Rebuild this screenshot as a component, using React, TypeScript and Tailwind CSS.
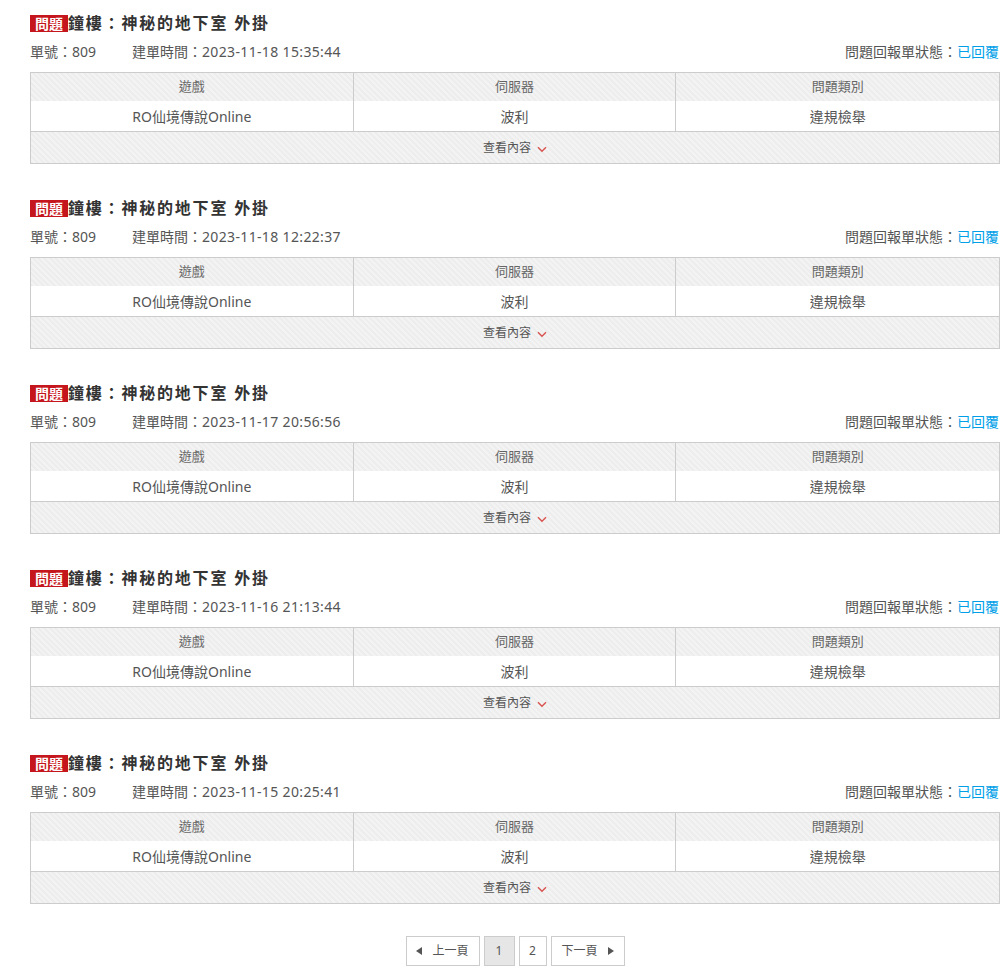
import React from "react";

interface Ticket {
  no: string;
  createdAt: string;
  game: string;
  server: string;
  category: string;
}

const tickets: Ticket[] = [
  { no: "809", createdAt: "2023-11-18 15:35:44", game: "RO仙境傳說Online", server: "波利", category: "違規檢舉" },
  { no: "809", createdAt: "2023-11-18 12:22:37", game: "RO仙境傳說Online", server: "波利", category: "違規檢舉" },
  { no: "809", createdAt: "2023-11-17 20:56:56", game: "RO仙境傳說Online", server: "波利", category: "違規檢舉" },
  { no: "809", createdAt: "2023-11-16 21:13:44", game: "RO仙境傳說Online", server: "波利", category: "違規檢舉" },
  { no: "809", createdAt: "2023-11-15 20:25:41", game: "RO仙境傳說Online", server: "波利", category: "違規檢舉" },
];

const stripe =
  "bg-[repeating-linear-gradient(45deg,#ededed_0px,#ededed_2px,#f3f3f3_2px,#f3f3f3_4px)]";

const ChevronDown = () => (
  <svg width="10" height="7" viewBox="0 0 10 7" className="ml-[6px] mt-[3px]">
    <path d="M1 1.2 L5 5.2 L9 1.2" fill="none" stroke="#d9534f" strokeWidth="1.4" />
  </svg>
);

const TicketCard: React.FC<{ ticket: Ticket }> = ({ ticket }) => {
  return (
    <div className="mb-[32px]">
      <div className="flex items-center h-[24px]">
        <span className="bg-[#c4161c] text-white text-[14px] font-bold leading-[17px] h-[17px] w-[38px] flex items-center justify-center">
          問題
        </span>
        <span className="text-[#333] text-[16px] font-bold tracking-[1.8px] leading-[24px]">
          鐘樓：神秘的地下室 外掛
        </span>
      </div>
      <div className="flex items-center justify-between h-[20px] mt-[6px] text-[14px] text-[#555]">
        <div className="flex">
          <span className="w-[102px]">單號：{ticket.no}</span>
          <span>
            建單時間：<span className="tracking-[0.35px]">{ticket.createdAt}</span>
          </span>
        </div>
        <div className="pr-[1px]">
          問題回報單狀態：<span className="text-[#009fe8]">已回覆</span>
        </div>
      </div>
      <div className="mt-[11px] border border-[#ccc]">
        <div className={`grid grid-cols-3 h-[28px] text-[13px] text-[#666] ${stripe}`}>
          <div className="flex items-center justify-center border-r border-[#ccc]">遊戲</div>
          <div className="flex items-center justify-center border-r border-[#ccc]">伺服器</div>
          <div className="flex items-center justify-center">問題類別</div>
        </div>
        <div className="grid grid-cols-3 h-[31px] text-[14px] text-[#555] bg-white border-b border-[#ccc]">
          <div className="flex items-center justify-center border-r border-[#ccc]">{ticket.game}</div>
          <div className="flex items-center justify-center border-r border-[#ccc]">{ticket.server}</div>
          <div className="flex items-center justify-center">{ticket.category}</div>
        </div>
        <div className={`flex items-center justify-center h-[31px] text-[12px] text-[#555] cursor-pointer ${stripe}`}>
          查看內容
          <ChevronDown />
        </div>
      </div>
    </div>
  );
};

export default function App() {
  return (
    <div
      className="bg-white min-h-[968px] w-[1007px]"
      style={{ fontFamily: '"Noto Sans", "Noto Sans CJK TC", sans-serif' }}
    >
      <div className="ml-[30px] w-[970px] pt-[11px]">
        {tickets.map((t, i) => (
          <TicketCard key={i} ticket={t} />
        ))}
        <div className="flex justify-center gap-[4px] mt-[1px] text-[12px] text-[#555]">
          <button className="flex items-center justify-center gap-[10px] w-[74px] h-[30px] border border-[#ccc] bg-white">
            <svg width="6" height="8" viewBox="0 0 6 8">
              <path d="M6 0 L0 4 L6 8 Z" fill="#555" />
            </svg>
            上一頁
          </button>
          <button className="w-[31px] h-[30px] border border-[#ccc] bg-[#e6e6e6]">1</button>
          <button className="w-[28px] h-[30px] border border-[#ccc] bg-white">2</button>
          <button className="flex items-center justify-center gap-[10px] w-[74px] h-[30px] border border-[#ccc] bg-white">
            下一頁
            <svg width="6" height="8" viewBox="0 0 6 8">
              <path d="M0 0 L6 4 L0 8 Z" fill="#555" />
            </svg>
          </button>
        </div>
      </div>
    </div>
  );
}
